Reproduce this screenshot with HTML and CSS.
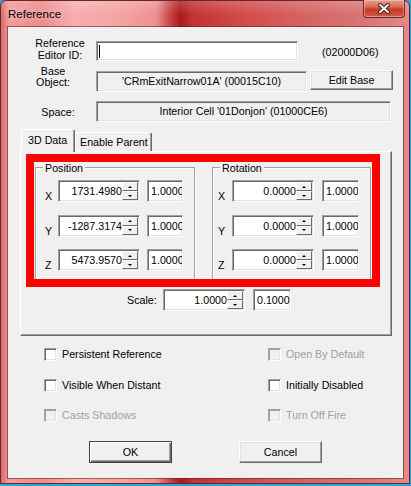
FILE: index.html
```html
<!DOCTYPE html>
<html>
<head>
<meta charset="utf-8">
<link rel="stylesheet" href="styles.css">
</head>
<body>
<div class="window">
  <div class="titlebar">
    <span class="title">Reference</span>
    <div class="close">
      <svg width="14" height="11" viewBox="0 0 14 11">
        <path d="M3 2 L11 9 M11 2 L3 9" stroke="#4a1a14" stroke-width="4" stroke-linecap="round" fill="none"/>
        <path d="M3 2 L11 9 M11 2 L3 9" stroke="#ffffff" stroke-width="2" stroke-linecap="round" fill="none"/>
      </svg>
    </div>
  </div>
  <div class="client">
    <div class="row row1">
      <div class="lbl lbl1">Reference<br>Editor ID:</div>
      <div class="edit e1"><span class="caret"></span></div>
      <div class="formid">(02000D06)</div>
    </div>
    <div class="row row2">
      <div class="lbl lbl2">Base<br>Object:</div>
      <div class="edit e2 ro">'CRmExitNarrow01A' (00015C10)</div>
      <div class="btn editbase">Edit Base</div>
    </div>
    <div class="row row3">
      <div class="lbl lbl3">Space:</div>
      <div class="edit e3 ro">Interior Cell '01Donjon' (01000CE6)</div>
    </div>

    <div class="tabs">
      <div class="tab sel">3D Data</div>
      <div class="tab other">Enable Parent</div>
    </div>
    <div class="panel">
      <div class="redbox">
        <div class="redin">
          <div class="group gpos">
            <div class="ghead"><span>Position</span></div>
            <div class="gbody">
              <div class="vrow">
                <div class="axis">X</div>
                <div class="spin"><div class="val">1731.4980</div><div class="arrows"><div class="sb up"></div><div class="sb dn"></div></div></div>
                <div class="box">1.0000</div>
              </div>
              <div class="vrow">
                <div class="axis">Y</div>
                <div class="spin"><div class="val">-1287.3174</div><div class="arrows"><div class="sb up"></div><div class="sb dn"></div></div></div>
                <div class="box">1.0000</div>
              </div>
              <div class="vrow">
                <div class="axis">Z</div>
                <div class="spin"><div class="val">5473.9570</div><div class="arrows"><div class="sb up"></div><div class="sb dn"></div></div></div>
                <div class="box">1.0000</div>
              </div>
            </div>
          </div>
          <div class="group grot">
            <div class="ghead"><span>Rotation</span></div>
            <div class="gbody">
              <div class="vrow">
                <div class="axis">X</div>
                <div class="spin"><div class="val">0.0000</div><div class="arrows"><div class="sb up"></div><div class="sb dn"></div></div></div>
                <div class="box">1.0000</div>
              </div>
              <div class="vrow">
                <div class="axis">Y</div>
                <div class="spin"><div class="val">0.0000</div><div class="arrows"><div class="sb up"></div><div class="sb dn"></div></div></div>
                <div class="box">1.0000</div>
              </div>
              <div class="vrow">
                <div class="axis">Z</div>
                <div class="spin"><div class="val">0.0000</div><div class="arrows"><div class="sb up"></div><div class="sb dn"></div></div></div>
                <div class="box">1.0000</div>
              </div>
            </div>
          </div>
        </div>
      </div>
      <div class="scalerow">
        <div class="scalelbl">Scale:</div>
        <div class="spin"><div class="val">1.0000</div><div class="arrows"><div class="sb up"></div><div class="sb dn"></div></div></div>
        <div class="box sbox">0.1000</div>
      </div>
    </div>

    <div class="checks">
      <div class="chk"><span class="cb"></span>Persistent Reference</div>
      <div class="chk dis"><span class="cb"></span>Open By Default</div>
      <div class="chk"><span class="cb"></span>Visible When Distant</div>
      <div class="chk"><span class="cb"></span>Initially Disabled</div>
      <div class="chk dis"><span class="cb"></span>Casts Shadows</div>
      <div class="chk dis"><span class="cb"></span>Turn Off Fire</div>
    </div>

    <div class="buttons">
      <div class="btn dlg def">OK</div>
      <div class="btn dlg">Cancel</div>
    </div>
  </div>
</div>
</body>
</html>
```

FILE: styles.css
```css
* { box-sizing: border-box; }
html, body { margin: 0; padding: 0; }
body {
  width: 411px;
  height: 486px;
  overflow: hidden;
  background: #2aa6dc;
  font-family: "Liberation Sans", Arial, sans-serif;
  font-size: 10.7px;
  color: #000;
}

/* ---------- window frame ---------- */
.window {
  width: 410px;
  height: 484px;
  border: 1px solid #6a2626;
  border-radius: 6px 6px 0 0;
  display: flex;
  flex-direction: column;
  background:
    linear-gradient(180deg, rgba(255,255,255,0.18) 0px, rgba(255,255,255,0) 14px),
    linear-gradient(90deg,
      #d86c6c 0%, #f39a9a 2%, #ef8a8a 10%, #f6aeae 18%, #f4a2a2 30%,
      #ee9090 38%, #c43838 42%, #a91c1c 44%, #c43232 47%, #d24c4c 60%,
      #d66464 75%, #d87474 88%, #e08a8a 100%);
}
.titlebar {
  height: 26px;
  display: flex;
  justify-content: space-between;
  align-items: flex-start;
}
.title {
  padding: 6px 0 0 7px;
  font-size: 11.5px;
  line-height: 14px;
  color: #000;
  text-shadow: 0 0 6px rgba(255,255,255,0.8);
}
.close {
  width: 42px;
  height: 18px;
  margin: -1px 4px 0 0;
  border: 1px solid #6b2a22;
  border-top: none;
  border-radius: 0 0 4px 4px;
  background: linear-gradient(180deg, #e6a090 0%, #d86a55 40%, #c43a26 55%, #d25a3e 100%);
  box-shadow: inset 0 0 0 1px rgba(255,220,210,0.45);
  display: flex;
  align-items: center;
  justify-content: center;
}

/* ---------- client ---------- */
.client {
  margin-left: 7px;
  width: 395px;
  height: 451px;
  background: #f0f0f0;
  box-shadow: 0 0 0 1px rgba(90,30,30,0.55);
  display: flex;
  flex-direction: column;
}

.row { display: flex; margin-left: 20px; }
.row1 { margin-top: 9px; height: 25px; align-items: flex-end; }
.row2 { margin-top: 5px; align-items: flex-start; }
.row3 { margin-top: 9px; align-items: center; }

.lbl { width: 64px; text-align: center; }
.lbl1 { line-height: 12px; }
.lbl2 { line-height: 11px; padding-right: 14px; }
.lbl3 { line-height: 12px; padding-right: 4px; }

.edit {
  margin-left: 4px;
  background: #fff;
  border: 1px solid;
  border-color: #a0a0a0 #fff #fff #a0a0a0;
  box-shadow: inset 1px 1px 0 #696969, inset -1px -1px 0 #e3e3e3;
  white-space: nowrap;
  overflow: hidden;
}
.edit.ro {
  background: #f0f0f0;
  text-align: center;
  line-height: 19px;
}
.e1 { width: 202px; height: 20px; padding: 3px 0 0 2px; }
.caret { display: block; width: 1px; height: 13px; background: #000; }
.formid { margin: 0 0 3px 24px; line-height: 12px; }
.e2 { width: 211px; height: 21px; margin-top: 5px; }
.e3 { width: 295px; height: 21px; }

.btn {
  background: #f0f0f0;
  border: 1px solid;
  border-color: #fff #696969 #696969 #fff;
  box-shadow: inset -1px -1px 0 #a0a0a0, inset 1px 1px 0 #e3e3e3;
  display: flex;
  align-items: center;
  justify-content: center;
}
.editbase { width: 83px; height: 20px; margin: 4px 0 0 3px; }

/* ---------- tabs ---------- */
.tabs {
  margin: 7px 0 0 13px;
  height: 22px;
  display: flex;
  align-items: flex-end;
}
.tab {
  height: 19px;
  border: 1px solid;
  border-bottom: none;
  border-color: #fff #696969 #696969 #fff;
  border-radius: 2px 2px 0 0;
  box-shadow: inset -1px 0 0 #a0a0a0;
  background: #f0f0f0;
  display: flex;
  align-items: center;
  white-space: nowrap;
}
.tab.sel {
  position: relative;
  z-index: 1;
  width: 54px;
  height: 23px;
  margin-bottom: -1px;
  padding: 0 0 3px 6px;
}
.tab.other { width: 77px; padding: 0 0 1px 4px; }

.panel {
  margin-left: 12px;
  width: 372px;
  height: 185px;
  border: 1px solid;
  border-color: #fff #696969 #696969 #fff;
  box-shadow: inset -1px -1px 0 #a0a0a0;
}

.redbox {
  margin: 2px 0 0 5px;
  width: 354px;
  height: 133px;
  border: 8px solid #ff0000;
}
.redin {
  height: 100%;
  overflow: hidden;
  display: flex;
  align-items: flex-start;
}

/* ---------- group boxes ---------- */
.group { display: flex; flex-direction: column; }
.gpos { margin-left: 1px; width: 160px; }
.grot { margin-left: 17px; width: 159px; }
.ghead {
  height: 12px;
  display: flex;
  line-height: 12px;
}
.ghead::before, .ghead::after {
  content: "";
  align-self: flex-end;
  height: 6px;
  border-top: 1px solid #a0a0a0;
  box-shadow: inset 0 1px 0 #fff;
}
.ghead::before {
  width: 7px;
  border-left: 1px solid #a0a0a0;
  box-shadow: inset 1px 1px 0 #fff;
}
.ghead::after {
  flex: 1;
  border-right: 1px solid #a0a0a0;
  box-shadow: inset 0 1px 0 #fff, 1px 0 0 #fff;
}
.ghead span { padding: 0 2px; }
.gbody {
  height: 130px;
  border: 1px solid #a0a0a0;
  border-top: none;
  box-shadow: inset 1px 0 0 #fff, 1px 0 0 #fff;
  padding-top: 6px;
  display: flex;
  flex-direction: column;
  gap: 12.5px;
}
.gpos .gbody { padding-left: 9px; }
.grot .gbody { padding-left: 5px; }

.vrow { display: flex; align-items: flex-end; height: 22px; }
.axis { width: 13px; line-height: 12px; }
.grot .axis { width: 14px; }

.spin {
  width: 82px;
  height: 22px;
  padding: 1px;
  display: flex;
  background: #fff;
  border: 1px solid;
  border-color: #a0a0a0 #fff #fff #a0a0a0;
  box-shadow: inset 1px 1px 0 #696969, inset -1px -1px 0 #e3e3e3;
}
.val {
  flex: 1;
  text-align: right;
  line-height: 18px;
  white-space: nowrap;
  overflow: hidden;
}
.arrows { width: 16px; display: flex; flex-direction: column; }
.sb {
  height: 9px;
  background: #f0f0f0;
  border: 1px solid;
  border-color: #fff #696969 #696969 #fff;
  display: flex;
  align-items: center;
  justify-content: center;
}
.sb::after {
  content: "";
  width: 0;
  height: 0;
  border-left: 2px solid transparent;
  border-right: 2px solid transparent;
}
.sb.up::after { border-bottom: 2px solid #000; }
.sb.dn::after { border-top: 2px solid #000; }

.box {
  width: 36px;
  height: 22px;
  margin-left: 7px;
  padding: 1px 0 0 3px;
  line-height: 18px;
  background: #fff;
  white-space: nowrap;
  overflow: hidden;
  border: 1px solid;
  border-color: #a0a0a0 #fff #fff #a0a0a0;
  box-shadow: inset 1px 1px 0 #696969, inset -1px -1px 0 #e3e3e3;
}
.grot .box { width: 37px; margin-left: 8px; }

.scalerow {
  margin: 2px 0 0 106px;
  display: flex;
  align-items: center;
}
.scalelbl { width: 36px; }
.sbox { width: 38px; margin-left: 8px; }

/* ---------- checkboxes ---------- */
.checks {
  margin: 12px 0 0 36px;
  display: grid;
  grid-template-columns: 224px auto;
  row-gap: 17.5px;
}
.chk {
  height: 13px;
  display: flex;
  align-items: center;
  line-height: 13px;
  white-space: nowrap;
}
.cb {
  width: 13px;
  height: 13px;
  margin-right: 5px;
  background: #fff;
  border: 1px solid;
  border-color: #a0a0a0 #fff #fff #a0a0a0;
  box-shadow: inset 1px 1px 0 #696969, inset -1px -1px 0 #e3e3e3;
}
.chk.dis { color: #a0a0a0; }
.chk.dis .cb {
  background: #f0f0f0;
  box-shadow: inset 1px 1px 0 #a0a0a0, inset -1px -1px 0 #e3e3e3;
}

/* ---------- buttons ---------- */
.buttons {
  margin: 19px 0 0 81px;
  display: flex;
  gap: 67px;
}
.btn.dlg { width: 83px; height: 22px; }
.btn.def {
  border-color: #444;
  box-shadow: inset 1px 1px 0 #fff, inset -1px -1px 0 #696969, inset -2px -2px 0 #a0a0a0;
}
```
